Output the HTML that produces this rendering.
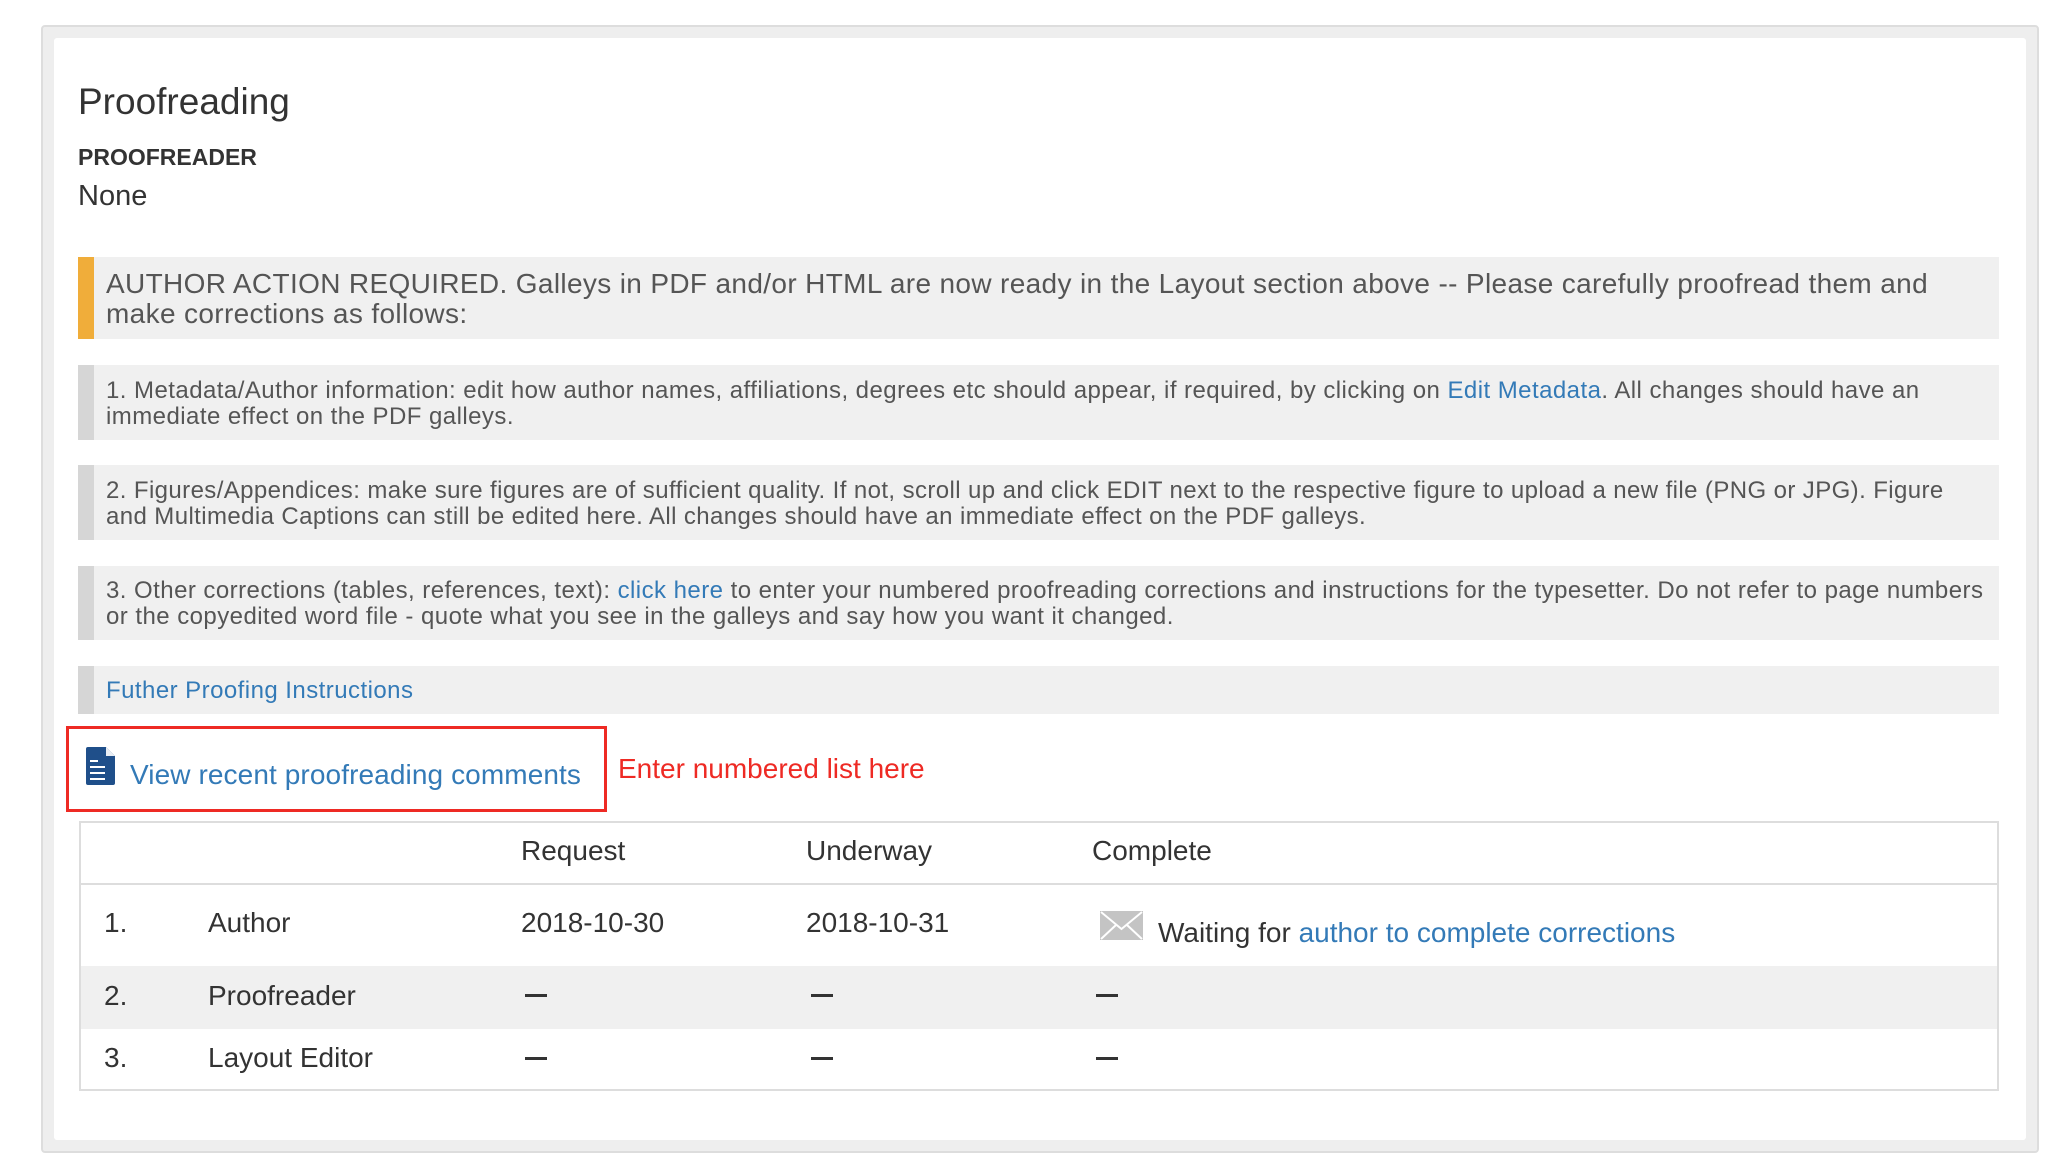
<!DOCTYPE html>
<html><head><meta charset="utf-8"><style>
*{margin:0;padding:0;box-sizing:border-box}
body{width:2064px;height:1174px;background:#fff;font-family:"Liberation Sans",Arial,sans-serif;position:relative;overflow:hidden;color:#333}
.abs{position:absolute;white-space:nowrap}
.outer{position:absolute;left:41px;top:25px;width:1998px;height:1128px;background:#eee;border:2px solid #ddd;border-radius:4px}
.inner{position:absolute;left:54px;top:38px;width:1972px;height:1102px;background:#fff;border-radius:3px}
.box{position:absolute;left:78px;width:1921px;background:#f0f0f0;border-left:16px solid #d6d6d6}
.bt{position:absolute;left:106px;font-size:24px;letter-spacing:0.45px;color:#555;white-space:nowrap;line-height:26px}
a{color:#337ab7;text-decoration:none}
.td{position:absolute;font-size:28px;color:#333;white-space:nowrap}
.dash{position:absolute;width:22px;height:3px;background:#333}
</style></head><body>
<div class="outer"></div>
<div class="inner"></div>
<div class="abs" style="left:78px;top:81px;font-size:37px;color:#333">Proofreading</div>
<div class="abs" style="left:78px;top:144px;font-size:23px;font-weight:bold;color:#333">PROOFREADER</div>
<div class="abs" style="left:78px;top:180px;font-size:29px;color:#333">None</div>

<div class="box" style="top:257px;height:82px;border-left-color:#f0ad3a"></div>
<div class="bt" style="top:269px;font-size:28px;letter-spacing:0.35px;line-height:30px;color:#555">AUTHOR ACTION REQUIRED. Galleys in PDF and/or HTML are now ready in the Layout section above -- Please carefully proofread them and<br>make corrections as follows:</div>

<div class="box" style="top:365px;height:75px"></div>
<div class="bt" style="top:378px">1. Metadata/Author information: edit how author names, affiliations, degrees etc should appear, if required, by clicking on <a>Edit Metadata</a>. All changes should have an<br>immediate effect on the PDF galleys.</div>

<div class="box" style="top:465px;height:75px"></div>
<div class="bt" style="top:478px;letter-spacing:0.4px">2. Figures/Appendices: make sure figures are of sufficient quality. If not, scroll up and click EDIT next to the respective figure to upload a new file (PNG or JPG). Figure<br>and Multimedia Captions can still be edited here. All changes should have an immediate effect on the PDF galleys.</div>

<div class="box" style="top:566px;height:74px"></div>
<div class="bt" style="top:578px">3. Other corrections (tables, references, text): <a>click here</a> to enter your numbered proofreading corrections and instructions for the typesetter. Do not refer to page numbers<br>or the copyedited word file - quote what you see in the galleys and say how you want it changed.</div>

<div class="box" style="top:666px;height:48px"></div>
<div class="bt" style="top:678px"><a>Futher Proofing Instructions</a></div>

<div style="position:absolute;left:66px;top:726px;width:541px;height:86px;border:3px solid #ee2a24"></div>
<svg class="abs" style="left:86px;top:747px" width="30" height="38" viewBox="0 0 30 38">
<path d="M2 0H20L29 9V36Q29 38 27 38H2Q0 38 0 36V2Q0 0 2 0Z" fill="#1f4f8a"/>
<path d="M20 0V9H29" fill="#fff" opacity="0.9"/>
<rect x="4" y="13" width="8" height="2" fill="#fff"/><rect x="4" y="19" width="15" height="2" fill="#fff"/>
<rect x="4" y="25" width="15" height="2" fill="#fff"/><rect x="4" y="31" width="15" height="2" fill="#fff"/>
</svg>
<div class="abs" style="left:130px;top:759px;font-size:28px;letter-spacing:0.1px;color:#337ab7">View recent proofreading comments</div>
<div class="abs" style="left:618px;top:753px;font-size:28px;color:#ee2a24">Enter numbered list here</div>

<div style="position:absolute;left:79px;top:821px;height:270px;border:2px solid #ddd;width:1920px"></div>
<div style="position:absolute;left:81px;top:883px;width:1916px;height:2px;background:#ddd"></div>
<div style="position:absolute;left:81px;top:966px;width:1916px;height:63px;background:#f0f0f0"></div>
<div class="td" style="left:521px;top:835px">Request</div>
<div class="td" style="left:806px;top:835px">Underway</div>
<div class="td" style="left:1092px;top:835px">Complete</div>
<div class="td" style="left:104px;top:907px">1.</div>
<div class="td" style="left:208px;top:907px">Author</div>
<div class="td" style="left:521px;top:907px">2018-10-30</div>
<div class="td" style="left:806px;top:907px">2018-10-31</div>
<svg class="abs" style="left:1100px;top:911px" width="43" height="29" viewBox="0 0 43 29"><rect width="43" height="29" fill="#c4c4c4"/><path d="M1 1L21.5 18L42 1M1 28L16 14M42 28L27 14" stroke="#fff" stroke-width="2" fill="none"/></svg>
<div class="td" style="left:1158px;top:917px">Waiting for <a>author to complete corrections</a></div>
<div class="td" style="left:104px;top:980px">2.</div>
<div class="td" style="left:208px;top:980px">Proofreader</div>
<div class="dash" style="left:525px;top:994px"></div>
<div class="dash" style="left:811px;top:994px"></div>
<div class="dash" style="left:1096px;top:994px"></div>
<div class="td" style="left:104px;top:1042px">3.</div>
<div class="td" style="left:208px;top:1042px">Layout Editor</div>
<div class="dash" style="left:525px;top:1057px"></div>
<div class="dash" style="left:811px;top:1057px"></div>
<div class="dash" style="left:1096px;top:1057px"></div>
</body></html>
